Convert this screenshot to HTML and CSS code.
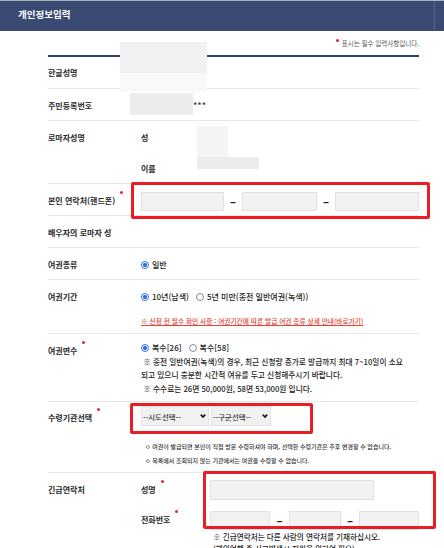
FILE: index.html
```html
<!DOCTYPE html>
<html lang="ko">
<head>
    <meta charset="UTF-8">
    <meta name="viewport" content="width=device-width, initial-scale=1.0">
    <title>개인정보입력</title>
    <link rel="stylesheet" href="styles.css">
</head>
<body>
    <div class="page-head">
        <h2>개인정보입력</h2>
    </div>

    <div class="form-wrap">
        <p class="req-note"><span class="req-star"></span>표시는 필수 입력사항입니다.</p>

        <div class="form-table">
            <div class="row first">
                <div class="th">한글성명</div>
                <div class="td"></div>
            </div>
            <div class="row">
                <div class="th">주민등록번호</div>
                <div class="td"><span class="masked">***</span></div>
            </div>
            <div class="row">
                <div class="th">로마자성명</div>
                <div class="td name-lines">
                    <div class="sub">성</div>
                    <div class="sub">이름</div>
                </div>
            </div>
            <div class="row">
                <div class="th">본인 연락처(핸드폰)<span class="req"></span></div>
                <div class="td phone">
                    <input type="text" class="box w83">
                    <span class="dash">–</span>
                    <input type="text" class="box w75">
                    <span class="dash">–</span>
                    <input type="text" class="box w84">
                </div>
            </div>
            <div class="row">
                <div class="th">배우자의 로마자 성</div>
                <div class="td"></div>
            </div>
            <div class="row tight">
                <div class="th">여권종류</div>
                <div class="td">
                    <label class="opt"><input type="radio" name="kind" checked>일반</label>
                </div>
            </div>
            <div class="row period">
                <div class="th">여권기간</div>
                <div class="td">
                    <div class="opts">
                        <label class="opt"><input type="radio" name="term" checked>10년(남색)</label>
                        <label class="opt"><input type="radio" name="term">5년 미만(종전 일반여권(녹색))</label>
                    </div>
                    <a class="notice-link" href="#">※ 신청 전 필수 확인 사항 : 여권기간에 따른 발급 여권 종류 상세 안내(바로가기)</a>
                </div>
            </div>
            <div class="row pages">
                <div class="th">여권면수<span class="req"></span></div>
                <div class="td">
                    <div class="opts">
                        <label class="opt"><input type="radio" name="pages" checked>복수[26]</label>
                        <label class="opt"><input type="radio" name="pages">복수[58]</label>
                    </div>
                    <p class="note">&nbsp;※ 종전 일반여권(녹색)의 경우, 최근 신청량 증가로 발급까지 최대 7~10일이 소요<br>되고 있으니 충분한 시간적 여유를 두고 신청해주시기 바랍니다.<br>&nbsp;※ 수수료는 26면 50,000원, 58면 53,000원 입니다.</p>
                </div>
            </div>
            <div class="row office">
                <div class="th">수령기관선택<span class="req"></span></div>
                <div class="td">
                    <div class="selects">
                        <div class="sel-wrap w68">
                            <select class="sel"><option>--시도선택--</option></select>
                            <svg class="chev" width="6" height="4" viewBox="0 0 6 4"><path d="M0.8 0.6 L3 3 L5.2 0.6" fill="none" stroke="#111" stroke-width="1.6"/></svg>
                        </div>
                        <div class="sel-wrap w60">
                            <select class="sel"><option>--구군선택--</option></select>
                            <svg class="chev" width="6" height="4" viewBox="0 0 6 4"><path d="M0.8 0.6 L3 3 L5.2 0.6" fill="none" stroke="#111" stroke-width="1.6"/></svg>
                        </div>
                    </div>
                    <p class="small-note">ㅇ 여권이 발급되면 본인이 직접 방문 수령하셔야 하며, 선택한 수령기관은 추후 변경할 수 없습니다.<br>ㅇ 목록에서 조회되지 않는 기관에서는 여권을 수령할 수 없습니다.</p>
                </div>
            </div>
            <div class="row emergency">
                <div class="th">긴급연락처</div>
                <div class="td emg">
                    <div class="sub">성명<span class="req"></span></div>
                    <div class="phone"><input type="text" class="box w164"></div>
                    <div class="sub">전화번호<span class="req"></span></div>
                    <div class="phone">
                        <input type="text" class="box w60">
                        <span class="dash d19">–</span>
                        <input type="text" class="box w52">
                        <span class="dash">–</span>
                        <input type="text" class="box w60">
                    </div>
                    <p class="emg-note">※ 긴급연락처는 다른 사람의 연락처를 기재하십시오.<br>(해외여행 중 사고발생시 지원을 위하여 필요)</p>
                </div>
            </div>
        </div>

        <!-- masked personal data -->
        <div class="blur a1"></div>
        <div class="blur a2"></div>
        <div class="blur b1"></div>
        <div class="blur c1"></div>
        <div class="blur c2"></div>

        <!-- red highlight marks -->
        <div class="mark m-phone"></div>
        <div class="mark m-office"></div>
        <div class="mark m-emg"></div>
    </div>
</body>
</html>
```

FILE: styles.css
```css
body {
    margin: 0;
    font-family: "Noto Sans CJK KR", "Noto Sans", sans-serif;
    color: #333;
    background-color: #fff;
    overflow: hidden;
}
.page-head {
    position: relative;
    height: 30px;
    border-top: 1px solid #aab1c1;
    background-color: #3a4a73;
}
.page-head::after {
    content: "";
    position: absolute;
    top: 0;
    bottom: 0;
    right: 9px;
    width: 1px;
    background-color: #55648a;
}
.page-head h2 {
    margin: 0;
    padding-left: 18px;
    line-height: 27px;
    font-size: 9.5px;
    font-weight: 700;
    color: #fff;
}
.form-wrap {
    position: relative;
    margin-left: 48px;
    width: 371px;
}
.req-note {
    margin: 0;
    height: 24px;
    padding-top: 6px;
    box-sizing: border-box;
    line-height: 12px;
    font-size: 6.5px;
    color: #555;
    text-align: right;
}
.req-star {
    display: inline-block;
    width: 3px;
    height: 3px;
    margin-right: 3px;
    border-radius: 50%;
    background-color: #e0262c;
    vertical-align: 4px;
}
.form-table {
    border-top: 2px solid #2f3f6c;
}
.row {
    display: grid;
    grid-template-columns: 93px 1fr;
    padding: 7px 0 4px;
    border-bottom: 1px solid #e8e8e8;
}
.row.first {
    padding-top: 6px;
    padding-bottom: 5px;
}
.row.tight {
    padding-bottom: 3px;
}
.row.period,
.row.pages {
    padding-bottom: 6px;
}
.row.office {
    padding-top: 6px;
}
.row.emergency {
    border-bottom: none;
}
.th, .sub {
    font-size: 8px;
    font-weight: 700;
    line-height: 20px;
    color: #2a2a2a;
    white-space: nowrap;
}
.td {
    font-size: 8px;
    font-weight: 500;
    line-height: 20px;
    color: #222;
}
.req {
    display: inline-block;
    width: 3px;
    height: 3px;
    margin-left: 5px;
    border-radius: 50%;
    background-color: #e0262c;
    vertical-align: 10px;
}
.masked {
    margin-left: 52px;
    font-size: 9px;
    color: #444;
}
.name-lines {
    display: flex;
    flex-direction: column;
    gap: 11px;
}
.phone {
    display: flex;
    align-items: center;
    height: 20px;
}
.box {
    height: 19px;
    margin: 0;
    padding: 0;
    box-sizing: border-box;
    border: 1px solid #e1e1e1;
    background-color: #f2f2f2;
}
.w83 { width: 83px; }
.w75 { width: 75px; }
.w84 { width: 84px; }
.w60 { width: 60px; }
.w52 { width: 52px; }
.w164 { width: 164px; height: 20px; }
.dash {
    width: 18px;
    text-align: center;
    font-size: 11px;
    font-weight: 900;
    color: #222;
}
.dash.d19 {
    width: 19px;
}
.opts {
    display: flex;
    align-items: center;
}
.opt {
    display: inline-flex;
    align-items: center;
    gap: 3px;
    margin-right: 7px;
    white-space: nowrap;
}
.opt input {
    appearance: none;
    width: 8px;
    height: 8px;
    margin: 0;
    border: 1px solid #8a8a8a;
    border-radius: 50%;
    background-color: #fff;
    box-sizing: border-box;
}
.opt input:checked {
    border-color: #2f6fe0;
    background: radial-gradient(circle, #2f6fe0 0 1.8px, #fff 2.3px);
}
.notice-link {
    display: block;
    margin-top: 8px;
    line-height: 12px;
    font-size: 6.7px;
    color: #e5443a;
    text-decoration: underline;
    white-space: nowrap;
}
.row.pages .td {
    line-height: 13.5px;
}
.note {
    margin: 0;
    font-size: 7.7px;
    color: #222;
    white-space: nowrap;
}
.selects {
    display: flex;
    gap: 2px;
    margin-top: -2px;
}
.sel-wrap {
    position: relative;
    height: 20px;
}
.w68 { width: 68px; }
.sel {
    appearance: none;
    width: 100%;
    height: 20px;
    margin: 0;
    padding: 0 0 0 1px;
    border: 1px solid #e4e4e4;
    background-color: #f1f1f1;
    font-family: inherit;
    font-size: 7.4px;
    font-weight: 500;
    color: #333;
}
.chev {
    position: absolute;
    top: 8px;
    right: 3px;
}
.small-note {
    margin: 14px 0 0 4px;
    line-height: 14px;
    font-size: 6px;
    color: #333;
    white-space: nowrap;
}
.emg {
    display: grid;
    grid-template-columns: 69px auto;
    row-gap: 10px;
}
.emg-note {
    grid-column: 2;
    margin: -9px 0 0 3px;
    line-height: 12px;
    font-size: 7.6px;
    font-weight: 500;
    color: #1a1a1a;
    white-space: nowrap;
}
.blur {
    position: absolute;
}
.blur.a1 { left: 72px; top: 11px; width: 87px; height: 31px; background-color: #f0f1f3; }
.blur.a2 { left: 72px; top: 42px; width: 87px; height: 19px; background-color: #f9f9fa; }
.blur.b1 { left: 82px; top: 62px; width: 63px; height: 22px; background-color: #ececec; }
.blur.c1 { left: 149px; top: 95px; width: 31px; height: 31px; background-color: #f4f4f5; }
.blur.c2 { left: 149px; top: 126px; width: 62px; height: 12px; background-color: #ececed; }
.mark {
    position: absolute;
    box-sizing: border-box;
    border: 3px solid #ec1c24;
    border-radius: 2px;
    pointer-events: none;
}
.m-phone { left: 83px; top: 151px; width: 299px; height: 37px; }
.m-office { left: 82px; top: 372px; width: 183px; height: 31px; }
.m-emg { left: 155px; top: 440px; width: 233px; height: 58px; }
```
